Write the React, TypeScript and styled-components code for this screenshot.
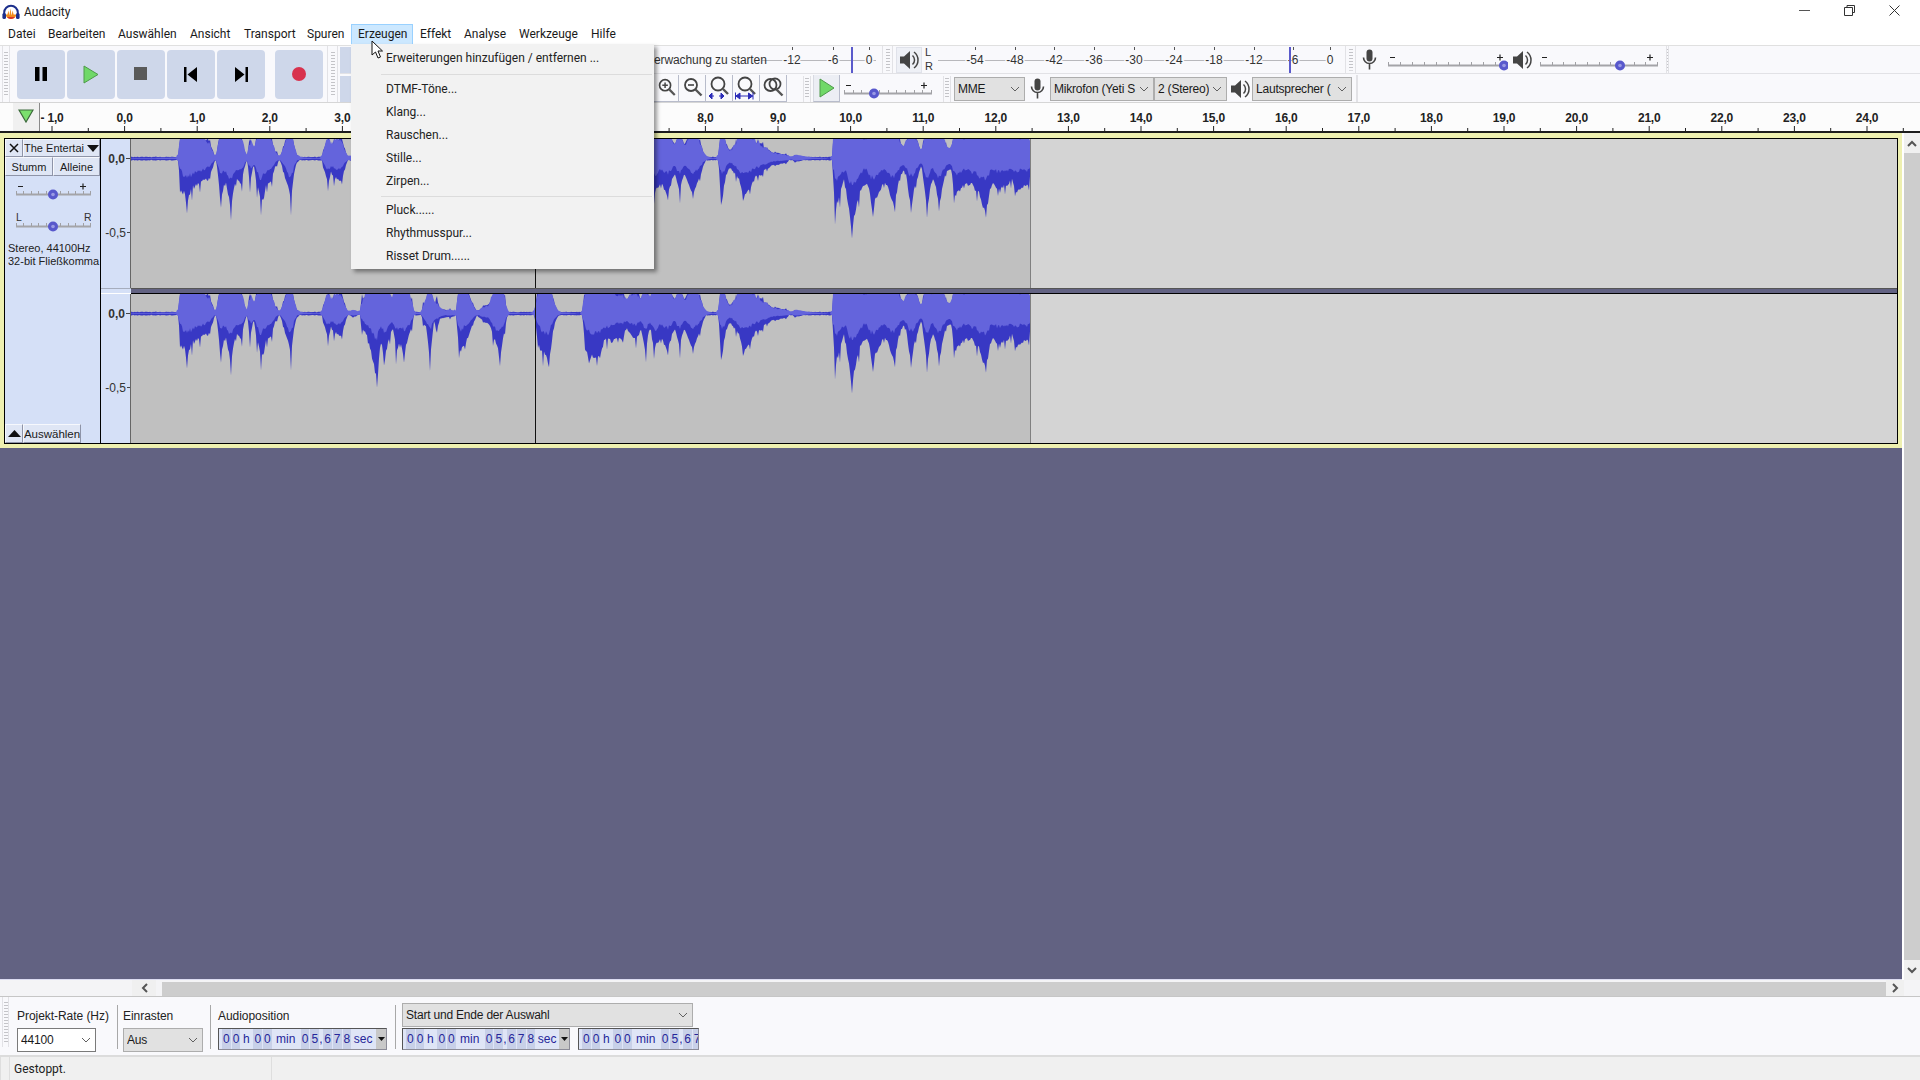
import React from "react";
import styled, { createGlobalStyle } from "styled-components";

const GlobalStyle = createGlobalStyle`
  html, body { margin: 0; padding: 0; background: #fff; }
  * { box-sizing: border-box; }
`;

const UI_FONT = `Roboto, "Noto Sans", sans-serif`;
const ARIAL = `"Liberation Sans", Arial, sans-serif`;
const PANEL = "#d5e0f7";
const BAR = "#f9f9fc";
const BLUE = "#626282";

// outline of the loudest sound, read off the picture in two stretches
const stretchA = [
  [0, 88], [145, 90], [150, 190], [170, 255], [185, 215], [210, 190], [240, 150], [250, 110], [258, 88], [262, 120], [272, 240],
  [285, 170], [302, 280], [318, 170], [335, 195], [345, 110], [352, 90], [360, 190], [372, 110], [380, 200], [392, 262], [410, 190],
  [425, 180], [432, 125], [442, 110], [448, 90], [460, 130], [483, 258], [495, 120], [505, 95], [520, 90], [575, 88], [580, 120],
  [595, 190], [605, 130], [612, 170], [635, 170], [645, 120], [655, 92], [668, 100], [690, 92], [695, 150], [715, 180], [742, 315],
  [752, 170], [763, 250], [780, 180], [792, 150], [798, 240], [810, 190], [822, 235], [845, 150], [852, 90], [875, 90], [880, 135],
  [890, 135], [900, 260], [912, 110], [920, 150], [928, 110], [945, 100], [960, 105], [978, 95], [988, 235], [1005, 195], [1030, 120],
  [1040, 95], [1060, 115], [1078, 120], [1090, 190], [1110, 245], [1125, 150], [1132, 90], [1200, 88],
].map(([x, y]) => [130 + x / 3, (y - 87) / 3]);

const stretchB = [
  [97, 560], [105, 650], [120, 710], [137, 715], [150, 600], [165, 556], [230, 552], [238, 660], [250, 705], [272, 710], [300, 660],
  [330, 640], [345, 640], [352, 600], [380, 660], [395, 600], [408, 705], [420, 600], [432, 695], [450, 640], [470, 680], [490, 600],
  [503, 695], [515, 600], [540, 675], [560, 620], [575, 560], [600, 552], [612, 560], [620, 715], [635, 600], [645, 580], [660, 620],
  [680, 680], [700, 660], [722, 620], [735, 610], [748, 590], [770, 575], [800, 570], [815, 555], [825, 565], [870, 556], [930, 552],
  [938, 750], [952, 700], [965, 630], [985, 795], [1005, 700], [1020, 630], [1045, 730], [1075, 640], [1105, 720], [1120, 620],
  [1135, 600], [1150, 720], [1165, 640], [1180, 570], [1195, 735], [1210, 620], [1230, 715], [1250, 600], [1265, 590], [1272, 700],
  [1300, 640], [1335, 680], [1360, 735], [1375, 640], [1395, 665], [1415, 660], [1430, 640], [1442, 665], [1465, 640], [1480, 660], [1486, 600],
].map(([x, y]) => [500 + x / 2.8, (y - 552) / 3]);

const outline = [...stretchA, ...stretchB];
const keyColumns = new Set(outline.map(([x]) => Math.round(x)));
const rnd = (i: number) => {
  const v = Math.sin(i * 12.9898) * 43758.5453;
  return v - Math.floor(v);
};
const depthAt = (x: number) => {
  for (let i = 1; i < outline.length; i++) {
    if (x <= outline[i][0]) {
      const [x0, y0] = outline[i - 1];
      const [x1, y1] = outline[i];
      return y0 + ((y1 - y0) * (x - x0)) / Math.max(x1 - x0, 0.01);
    }
  }
  return outline[outline.length - 1][1];
};
// quick wobble that splits the outline into separate spikes
const comb = (x: number) => {
  const cell = Math.floor(x / 4);
  const f = x / 4 - cell;
  return rnd(cell) * (1 - f) + rnd(cell + 1) * f;
};

const CENTER = 19.5;
const buildPaths = () => {
  const peakTop: string[] = [];
  const peakBottom: string[] = [];
  const rmsTop: string[] = [];
  const rmsBottom: string[] = [];
  for (let x = 131; x <= 1030; x++) {
    const d = depthAt(x);
    const px = x - 131;
    let peak = d < 3 ? 1.3 + rnd(x) * 0.8 : d * (0.6 + 0.28 * comb(x) + 0.12 * rnd(x));
    if (keyColumns.has(x) && d >= 3) peak = d;
    let sum = 0;
    for (let k = -2; k <= 2; k++) sum += depthAt(x + k);
    const avg = sum / 5;
    const rms = avg < 4 ? avg * 0.5 : Math.min(avg * 0.42 * (0.72 + 0.28 * rnd(x + 3)), peak);
    peakTop.push(`${px} ${(CENTER - Math.min(CENTER, peak * 0.9)).toFixed(1)}`);
    peakBottom.unshift(`${px} ${(CENTER + peak).toFixed(1)}`);
    rmsTop.push(`${px} ${(CENTER - Math.min(CENTER, rms * 1.9)).toFixed(1)}`);
    rmsBottom.unshift(`${px} ${(CENTER + rms).toFixed(1)}`);
  }
  return {
    peak: `M${peakTop.join("L")}L${peakBottom.join("L")}Z`,
    rms: `M${rmsTop.join("L")}L${rmsBottom.join("L")}Z`,
  };
};
const wavePaths = buildPaths();

const Page = styled.div`
  width: 1920px;
  height: 1080px;
  display: flex;
  flex-direction: column;
  overflow: hidden;
  position: relative;
  background: #fff;
  font-family: ${UI_FONT};
  color: #1a1a1a;
`;

const TitleBar = styled.div`
  height: 24px;
  display: flex;
  align-items: center;
  padding-left: 2px;
  background: #fff;
`;

const AppName = styled.span`
  margin-left: 4px;
  font-size: 12px;
  color: #222;
`;

const WindowButtons = styled.div`
  margin-left: auto;
  display: flex;
  align-items: center;
  padding: 0 20px 4px 0;
  gap: 34px;
`;

const MenuBar = styled.div`
  height: 21px;
  display: flex;
  padding-left: 1px;
  background: #fff;
`;

const MenuItem = styled.div<{ $w: number; $open?: boolean }>`
  width: ${(p) => p.$w}px;
  padding-left: 6px;
  font-size: 12px;
  line-height: 19px;
  white-space: nowrap;
  border: 1px solid ${(p) => (p.$open ? "#99d1ff" : "transparent")};
  background: ${(p) => (p.$open ? "#cce8ff" : "transparent")};
`;

const Toolbars = styled.div`
  height: 58px;
  display: flex;
  background: ${BAR};
  border-top: 1px solid #e0e0e0;
  border-bottom: 1px solid #d6d6d6;
`;

const TransportBar = styled.div`
  width: 340px;
  display: flex;
  align-items: center;
  padding-left: 2px;
`;

const Grip = styled.div<{ $w?: number; $h?: number }>`
  width: ${(p) => p.$w ?? 8}px;
  height: ${(p) => (p.$h ? `${p.$h}px` : "100%")};
  flex: none;
  border-left: 1px solid #e2e2e6;
  border-right: 1px solid #e2e2e6;
  background: repeating-linear-gradient(to bottom, #c4c4c8 0 1px, transparent 1px 3px) center / 4px 80% no-repeat;
`;

const TransportButtons = styled.div`
  display: flex;
  gap: 2px;
  margin-left: 7px;
`;

const TransportButton = styled.div<{ $gap?: number }>`
  width: 48px;
  height: 49px;
  margin-left: ${(p) => p.$gap ?? 0}px;
  display: flex;
  align-items: center;
  justify-content: center;
  background: #ced7ea;
  border-radius: 4px;
`;

const ToolRows = styled.div`
  flex: 1;
  display: flex;
  flex-direction: column;
`;

const ToolRow = styled.div<{ $top?: number }>`
  flex: 1;
  display: flex;
  align-items: center;
  padding-top: ${(p) => p.$top ?? 0}px;
  border-bottom: 1px solid #e2e2e6;

  &:last-child {
    border-bottom: 0;
  }
`;

const HiddenTools = styled.div`
  width: 314px;
  height: 100%;
  flex: none;
  display: flex;
  align-items: center;
`;

const ToolStub = styled.div`
  width: 11px;
  height: 26px;
  background: #ced7ea;
`;

const IconBox = styled.div<{ $w: number; $ml?: number }>`
  width: ${(p) => p.$w}px;
  margin-left: ${(p) => p.$ml ?? 0}px;
  height: 100%;
  flex: none;
  display: flex;
  align-items: center;
  justify-content: center;
`;

const SpeakerButton = styled(IconBox)`
  height: 26px;
  background: #eef0f6;
  border: 1px solid #e0e2ea;
`;

const ZoomButton = styled.div<{ $w?: number }>`
  width: ${(p) => p.$w ?? 27}px;
  height: 27px;
  flex: none;
  display: flex;
  align-items: center;
  justify-content: center;
  border-right: 1px solid #b8bccb;
  border-bottom: 1px solid #b8bccb;
`;

const PlayButton = styled(ZoomButton)`
  margin-left: 2px;
  background: #eceef4;
  border-left: 1px solid #d8dae2;
`;

const Select = styled.div<{ $w: number; $h?: number; $ml?: number; $white?: boolean }>`
  width: ${(p) => p.$w}px;
  height: ${(p) => p.$h ?? 24}px;
  margin-left: ${(p) => p.$ml ?? 0}px;
  flex: none;
  display: flex;
  align-items: center;
  gap: 3px;
  padding: 0 4px 0 3px;
  font-size: 12px;
  white-space: nowrap;
  overflow: hidden;
  background: ${(p) => (p.$white ? "#fff" : "#e1e1e1")};
  border: 1px solid ${(p) => (p.$white ? "#7a7a7a" : "#adadad")};
`;

const SelectText = styled.span`
  flex: 1;
  min-width: 0;
  overflow: hidden;
  font-family: ${ARIAL};
  letter-spacing: -0.2px;
`;

const Ruler = styled.div`
  height: 30px;
  position: relative;
  background: #fcfcfc;
  border-bottom: 2px solid #1c1c1c;
`;

const PlayHead = styled.div`
  position: absolute;
  left: 13px;
  top: 0;
  width: 27px;
  height: 28px;
  display: flex;
  justify-content: center;
  padding-top: 6px;
  background: #f0f0f0;
  border-right: 1px solid #8a8a8a;
`;

const Main = styled.div`
  flex: 1;
  min-height: 0;
  display: flex;
`;

const WorkArea = styled.div`
  width: 1902px;
  display: flex;
  flex-direction: column;
  background: ${BLUE};
  border-bottom: 1px solid #dcdcf2;
`;

const TrackFrame = styled.div`
  height: 315px;
  flex: none;
  padding: 5px 4px 4px 4px;
  background: #eef0b0;
`;

const Track = styled.div`
  height: 100%;
  display: flex;
  border: 1px solid #000;
`;

const ControlPanel = styled.div`
  width: 96px;
  flex: none;
  display: flex;
  flex-direction: column;
  background: ${PANEL};
  border-right: 1px solid #000;
  font-family: ${ARIAL};
`;

const PanelRow = styled.div<{ $h?: number }>`
  height: ${(p) => p.$h ?? 19}px;
  flex: none;
  display: flex;
`;

const PanelButton = styled.div<{ $w?: number; $grow?: boolean; $fs?: number }>`
  width: ${(p) => (p.$w ? `${p.$w}px` : "auto")};
  flex: ${(p) => (p.$grow ? 1 : "none")};
  min-width: 0;
  display: flex;
  align-items: center;
  justify-content: center;
  font-size: ${(p) => p.$fs ?? 11}px;
  white-space: nowrap;
  overflow: hidden;
  background: #dfe6f5;
  border: 1px solid #f6f8fd;
  border-right-color: #8e94a8;
  border-bottom-color: #8e94a8;
`;

const SliderSlot = styled.div<{ $mt: number }>`
  margin: ${(p) => p.$mt}px 0 0 11px;
  height: 22px;
`;

const TrackInfo = styled.div`
  margin: 9px 0 0 3px;
  font-size: 11px;
  line-height: 12.5px;
  white-space: nowrap;
  color: #222;
`;

const PanelFooter = styled.div`
  margin-top: auto;
  height: 19px;
  display: flex;
`;

const Channels = styled.div`
  flex: 1;
  display: flex;
  flex-direction: column;
`;

const Channel = styled.div`
  height: 149px;
  flex: none;
  display: flex;
  background: #d4d4d4;
`;

const ChannelGap = styled.div`
  height: 6px;
  flex: none;
  display: flex;
  background: ${BLUE};
  border-top: 1px solid #555;
  border-bottom: 1px solid #000;
`;

const GapPanel = styled.div`
  width: 30px;
  margin: -1px 0;
  background: ${PANEL};
  border-top: 1px solid #a6adbd;
  border-bottom: 1px solid #fff;
`;

const Scale = styled.div`
  width: 30px;
  flex: none;
  background: ${PANEL};
  border-right: 1px solid #666;
`;

const VScroll = styled.div`
  width: 16px;
  margin-left: 2px;
  display: flex;
  flex-direction: column;
  justify-content: space-between;
  background: #cdcdcd;
`;

const ScrollButton = styled.div<{ $w?: number; $h?: number }>`
  width: ${(p) => (p.$w ? `${p.$w}px` : "100%")};
  height: ${(p) => (p.$h ? `${p.$h}px` : "100%")};
  flex: none;
  display: flex;
  align-items: center;
  justify-content: center;
  background: #f0f0f0;
`;

const HScroll = styled.div`
  height: 17px;
  flex: none;
  display: flex;
  background: #f4f4f6;
  border-bottom: 1px solid #c6c6c6;
`;

const HScrollBlank = styled.div<{ $w: number }>`
  width: ${(p) => p.$w}px;
  flex: none;
`;

const HThumb = styled.div`
  flex: 1;
  margin-top: 2px;
  background: #cdcdcd;
`;

const BottomBar = styled.div`
  height: 58px;
  flex: none;
  display: flex;
  padding-left: 2px;
  background: ${BAR};
  font-family: ${ARIAL};
`;

const BottomGroup = styled.div<{ $w: number; $ml: number }>`
  width: ${(p) => p.$w}px;
  margin-left: ${(p) => p.$ml}px;
  flex: none;
  display: flex;
  flex-direction: column;
`;

const GroupTop = styled.div<{ $flush?: boolean }>`
  height: 31px;
  display: flex;
  align-items: flex-end;
  padding-bottom: ${(p) => (p.$flush ? 1 : 5)}px;
`;

const Label = styled.div`
  font-size: 12px;
  letter-spacing: -0.05px;
  white-space: nowrap;
  color: #222;
`;

const Controls = styled.div`
  display: flex;
  gap: 8px;
`;

const Separator = styled.div`
  width: 1px;
  height: 44px;
  margin: 8px 0 0 0;
  flex: none;
  background: #a8a8a8;
`;

const TimeField = styled.div<{ $w: number }>`
  width: ${(p) => p.$w}px;
  height: 22px;
  flex: none;
  display: flex;
  align-items: stretch;
  overflow: hidden;
  padding-left: 2px;
  font-size: 12px;
  color: #26269a;
  background: #dfe5f6;
  border: 1px solid #8c8c98;
  border-top-color: #555;
  border-left-color: #555;
`;

const Digit = styled.span`
  width: 9.7px;
  flex: none;
  text-align: center;
  line-height: 20px;
  background: #c8d0e8;
  border-left: 1px solid #dfe5f6;
`;

const Unit = styled.span<{ $w: number }>`
  width: ${(p) => p.$w}px;
  flex: none;
  text-align: center;
  line-height: 20px;
`;

const FieldArrow = styled.div`
  margin-left: auto;
  width: 10px;
  flex: none;
  display: flex;
  align-items: center;
  justify-content: center;
  background: #c8c8c8;
`;

const StatusBar = styled.div`
  height: 25px;
  flex: none;
  display: flex;
  background: #f0f0f0;
  border-top: 2px solid #dcdcdc;
  font-size: 12px;
  line-height: 24px;
  color: #222;
`;

const StatusCell = styled.div<{ $w: number }>`
  width: ${(p) => p.$w}px;
  padding-left: 4px;
  border-left: 1px solid #dedede;
`;

const Dropdown = styled.div`
  position: absolute;
  left: 351px;
  top: 44px;
  width: 303px;
  height: 225px;
  padding-top: 3px;
  background: #f2f2f2;
  box-shadow: 3px 3px 4px rgba(0, 0, 0, 0.4);
  font-size: 12px;
  color: #222;
`;

const DropdownItem = styled.div`
  height: 23px;
  line-height: 23px;
  padding-left: 35px;
  white-space: nowrap;
`;

const DropdownRule = styled.div<{ $tight?: boolean }>`
  height: 1px;
  margin: ${(p) => (p.$tight ? "3px 2px 2px 30px" : "4px 2px 3px 30px")};
  background: #dcdcdc;
`;

const Pointer = styled.svg`
  position: absolute;
  left: 371px;
  top: 40px;
`;

const SliderSvg = styled.svg<{ $drop?: number }>`
  flex: none;
  margin-top: ${(p) => p.$drop ?? 0}px;
`;

const Chevron = () => (
  <svg width="10" height="6" viewBox="0 0 10 6" style={{ flex: "none" }}>
    <path d="M1 1l4 4 4-4" fill="none" stroke="#606060" strokeWidth="1" />
  </svg>
);

const Logo = () => (
  <svg width="18" height="16" viewBox="0 0 18 16">
    <path d="M2.2 11V8.5a6.8 6.8 0 0 1 13.6 0V11" fill="none" stroke="#1c2f8c" strokeWidth="2" />
    <path d="M4 10.5h1.4l1-4 1 5 1-7 1.2 7 1-5 1 4H14v1.5c-1 2-3 3-5 3s-4-1-5-3z" fill="#f08a1c" />
    <path d="M5 13h8c-.9 1.3-2.500 2-4 2s-3.100-.7-4-2z" fill="#d8342a" />
    <rect x="0.400" y="9" width="3.600" height="6" rx="1.600" fill="#1c2f8c" />
    <rect x="14" y="9" width="3.600" height="6" rx="1.600" fill="#1c2f8c" />
  </svg>
);

const Magnifier = ({ mark, under }: { mark?: "plus" | "minus" | "double"; under?: "both" | "bars" }) => (
  <svg width="26" height="24" viewBox="0 0 26 24">
    {mark === "double" && <circle cx="15" cy="8" r="5.500" fill="none" stroke="#444" strokeWidth="1.800" />}
    <circle cx={mark === "double" ? 10.500 : 12} cy={under ? 8 : 9} r={under ? 6.500 : 6} fill="none" stroke="#444" strokeWidth="1.800" />
    <path d={under ? "M17 13l5 5" : "M16.500 13.500l6 6"} stroke="#555" strokeWidth="2.400" />
    {(mark === "plus" || mark === "minus") && <path d="M9 9h6" stroke="#444" strokeWidth="1.600" />}
    {mark === "plus" && <path d="M12 6v6" stroke="#444" strokeWidth="1.600" />}
    {under === "both" && <path d="M3 20h5M3 20l3-3v6zM18 20h-5M18 20l-3-3v6z" fill="#2c2cb8" stroke="#2c2cb8" strokeWidth="1" />}
    {under === "bars" && <path d="M2.500 16.500v7M20 16.500v7M2.500 20h17.500M3 20l4-3v6zM19.500 20l-4-3v6z" fill="#2c2cb8" stroke="#2c2cb8" strokeWidth="1" />}
  </svg>
);

const Mic = () => (
  <svg width="15" height="22" viewBox="0 0 15 22">
    <rect x="4.500" y="0.500" width="6" height="12" rx="3" fill="#444" />
    <path d="M1.500 8.500a6 6 0 0 0 12 0M7.500 14.500v6" fill="none" stroke="#444" strokeWidth="1.600" />
  </svg>
);

const Speaker = () => (
  <svg width="20" height="22" viewBox="0 0 20 22">
    <path d="M1 7.500h4l6-5.500v18l-6-5.500H1z" fill="#444" />
    <path d="M13.500 6.500a6 6 0 0 1 0 9M15 3a10 10 0 0 1 0 16" fill="none" stroke="#444" strokeWidth="1.500" />
  </svg>
);

type SliderProps = { width: number; thumb: number; ticks?: number; signs?: boolean; letters?: boolean; drop?: number };

const Slider = ({ width, thumb, ticks = 10, signs, letters, drop }: SliderProps) => (
  <SliderSvg $drop={drop} width={width} height="22" viewBox={`0 0 ${width} 22`}>
    {signs && <path d={`M2 7.500h5M${width - 11} 7.500h6M${width - 8} 4.500v6`} stroke="#222" strokeWidth="1.200" />}
    {letters && (
      <g fontFamily={ARIAL} fontSize="10.500" fill="#333">
        <text x="0" y="10">L</text>
        <text x={width - 7} y="10">R</text>
      </g>
    )}
    <path d={`M0 15.500H${width}`} stroke="#a4a4a8" strokeWidth="2" />
    {Array.from({ length: ticks + 1 }, (_, i) => {
      const x = Math.round((i * (width - 1)) / ticks) + 0.5;
      return <path key={i} d={`M${x} 12v3`} stroke="#a0a0a4" strokeWidth="1" />;
    })}
    <circle cx={thumb} cy="15.500" r="5" fill="#5858cc" />
    <circle cx={thumb} cy="15.500" r="1.800" fill="#9a9ae4" />
  </SliderSvg>
);

type MeterProps = { width: number; from: number; labels: [string, number][]; mark: number; lineStart: number; children?: React.ReactNode };

const Meter = ({ width, from, labels, mark, lineStart, children }: MeterProps) => (
  <svg width={width} height="27" viewBox={`0 0 ${width} 27`} style={{ flex: "none" }}>
    <path d={`M${lineStart} 14.500H${width - 3}`} stroke="#b8b8bc" strokeWidth="1" />
    {labels.map(([text, x]) => (
      <g key={text}>
        <path d={`M${x - from + 0.5} 1v3`} stroke="#555" strokeWidth="1" />
        <text
          x={x - from}
          y="18"
          textAnchor="middle"
          fontFamily={ARIAL}
          fontSize="12"
          fill="#333"
          stroke={BAR}
          strokeWidth="3"
          style={{ paintOrder: "stroke" }}
        >
          {text}
        </text>
      </g>
    ))}
    <rect x={mark - from} y="1" width="2" height="26" fill="#5a5acb" />
    {children}
  </svg>
);

const Wave = () => (
  <svg width="900" height="149" viewBox="0 0 900 149" style={{ flex: "none" }}>
    <rect width="900" height="149" fill="#c0c0c0" />
    <path d={wavePaths.peak} fill="#3838c4" />
    <path d={wavePaths.rms} fill="#6464dc" />
    <path d="M404.500 0v149" stroke="#111" strokeWidth="1" />
    <path d="M899.500 0v149" stroke="#808080" strokeWidth="1" />
  </svg>
);

const ScaleMarks = () => (
  <Scale>
    <svg width="29" height="149" viewBox="0 0 29 149">
      <text x="24" y="24" textAnchor="end" fontFamily={ARIAL} fontSize="12" fontWeight="700" fill="#333">0,0</text>
      <text x="25" y="98" textAnchor="end" fontFamily={ARIAL} fontSize="12" fill="#333">-0,5</text>
      <path d="M25 19.500h4M26 93.500h3" stroke="#444" strokeWidth="1" />
    </svg>
  </Scale>
);

const secondX = (t: number) => 124.6 + 72.6 * t;

// the labels for 4 to 7 seconds lie behind the open menu
const TimelineMarks = () => {
  const seconds = Array.from({ length: 26 }, (_, i) => i - 1);
  return (
    <svg width="1920" height="28" viewBox="0 0 1920 28">
      {seconds.map((t) => (
        <g key={t}>
          <path d={`M${secondX(t).toFixed(1)} 23v5`} stroke="#222" strokeWidth="1" />
          <path d={`M${secondX(t + 0.5).toFixed(1)} 25v3`} stroke="#222" strokeWidth="1" />
          {(t < 4 || t > 7) && (
            <text
              x={t < 0 ? 52 : secondX(t)}
              y="19"
              textAnchor="middle"
              fontFamily={ARIAL}
              fontSize="12"
              fontWeight="700"
              letterSpacing="-0.2"
              fill="#222"
            >
              {t < 0 ? "- 1,0" : `${t},0`}
            </text>
          )}
        </g>
      ))}
    </svg>
  );
};

const TimeDigits = ({ value }: { value: string }) => (
  <>
    {value.split("").map((c, i) => (
      <Digit key={i}>{c}</Digit>
    ))}
  </>
);

const Time = ({ w, full }: { w: number; full?: boolean }) => (
  <TimeField $w={w}>
    <TimeDigits value="00" />
    <Unit $w={12}>h</Unit>
    <TimeDigits value="00" />
    <Unit $w={28}>min</Unit>
    <TimeDigits value="05" />
    <Unit $w={3}>,</Unit>
    <TimeDigits value={full ? "678" : "67"} />
    {full && <Unit $w={24}>sec</Unit>}
    {full && (
      <FieldArrow>
        <svg width="7" height="4" viewBox="0 0 7 4">
          <path d="M0 0h7L3.500 4z" fill="#111" />
        </svg>
      </FieldArrow>
    )}
  </TimeField>
);

const menus: [string, number][] = [
  ["Datei", 40],
  ["Bearbeiten", 70],
  ["Auswählen", 72],
  ["Ansicht", 54],
  ["Transport", 63],
  ["Spuren", 51],
  ["Erzeugen", 62],
  ["Effekt", 44],
  ["Analyse", 55],
  ["Werkzeuge", 72],
  ["Hilfe", 50],
];

const recordLabels: [string, number][] = [
  ["-12", 792],
  ["-6", 833],
  ["0", 869],
];
const playLabels: [string, number][] = [
  ["-54", 975],
  ["-48", 1015],
  ["-42", 1054],
  ["-36", 1094],
  ["-30", 1134],
  ["-24", 1174],
  ["-18", 1214],
  ["-12", 1254],
  ["-6", 1293],
  ["0", 1330],
];

export default function App() {
  return (
    <>
      <GlobalStyle />
      <Page>
        <TitleBar>
          <Logo />
          <AppName>Audacity</AppName>
          <WindowButtons>
            <svg width="11" height="11" viewBox="0 0 11 11">
              <path d="M0 5.500h11" stroke="#555" strokeWidth="1" />
            </svg>
            <svg width="11" height="11" viewBox="0 0 11 11">
              <path d="M3 2.500V.5h7.500v7H8.500M.5 2.500h8v8h-8z" fill="none" stroke="#333" strokeWidth="1" />
            </svg>
            <svg width="11" height="11" viewBox="0 0 11 11">
              <path d="M.5.5l10 10M10.500.5l-10 10" stroke="#333" strokeWidth="1" />
            </svg>
          </WindowButtons>
        </TitleBar>

        <MenuBar>
          {menus.map(([name, w]) => (
            <MenuItem key={name} $w={w} $open={name === "Erzeugen"}>
              {name}
            </MenuItem>
          ))}
        </MenuBar>

        <Toolbars>
          <TransportBar>
            <Grip />
            <TransportButtons>
              <TransportButton>
                <svg width="14" height="16" viewBox="0 0 14 16">
                  <path d="M1 1h4.500v14H1zM8.500 1H13v14H8.500z" fill="#000" />
                </svg>
              </TransportButton>
              <TransportButton>
                <svg width="16" height="19" viewBox="0 0 16 19">
                  <path d="M1 1l14 8.500L1 18z" fill="#70d868" stroke="#4e9a4a" strokeWidth="1" />
                </svg>
              </TransportButton>
              <TransportButton>
                <svg width="14" height="14" viewBox="0 0 14 14">
                  <rect width="13" height="13" fill="#5a5a5a" />
                </svg>
              </TransportButton>
              <TransportButton>
                <svg width="14" height="15" viewBox="0 0 14 15">
                  <path d="M0 0h2.500v15H0zM13 0v15L3.500 7.500z" fill="#000" />
                </svg>
              </TransportButton>
              <TransportButton>
                <svg width="14" height="15" viewBox="0 0 14 15">
                  <path d="M11.500 0H14v15h-2.500zM1 0v15l9.500-7.500z" fill="#000" />
                </svg>
              </TransportButton>
              <TransportButton $gap={8}>
                <svg width="16" height="16" viewBox="0 0 16 16">
                  <circle cx="8" cy="8" r="7" fill="#d8324e" />
                </svg>
              </TransportButton>
            </TransportButtons>
            <IconBox $w={4} />
            <Grip $w={11} />
          </TransportBar>

          <ToolRows>
            <ToolRow>
              <HiddenTools>
                <ToolStub />
              </HiddenTools>
              <Meter width={225} from={654} labels={recordLabels} mark={851} lineStart={108}>
                <text x="0" y="18" fontFamily={ARIAL} fontSize="12" letterSpacing="-0.1" fill="#333">
                  erwachung zu starten
                </text>
              </Meter>
              <IconBox $w={3} />
              <Grip $w={11} />
              <IconBox $w={3} />
              <SpeakerButton $w={26}>
                <Speaker />
              </SpeakerButton>
              <Meter width={415} from={922} labels={playLabels} mark={1289} lineStart={16}>
                <text x="3" y="10" fontFamily={ARIAL} fontSize="11" fill="#333">L</text>
                <text x="3" y="24" fontFamily={ARIAL} fontSize="11" fill="#333">R</text>
              </Meter>
              <IconBox $w={8} />
              <Grip $w={11} />
              <IconBox $w={15} $ml={6}>
                <Mic />
              </IconBox>
              <IconBox $w={11} />
              <Slider width={120} thumb={116} signs drop={2} />
              <IconBox $w={28}>
                <Speaker />
              </IconBox>
              <IconBox $w={0} $ml={4} />
              <Slider width={118} thumb={80} signs drop={2} />
              <IconBox $w={8} />
              <Grip $w={3} />
            </ToolRow>

            <ToolRow $top={1}>
              <HiddenTools>
                <ToolStub />
              </HiddenTools>
              <ZoomButton $w={25}>
                <Magnifier mark="plus" />
              </ZoomButton>
              <ZoomButton>
                <Magnifier mark="minus" />
              </ZoomButton>
              <ZoomButton>
                <Magnifier under="both" />
              </ZoomButton>
              <ZoomButton>
                <Magnifier under="bars" />
              </ZoomButton>
              <ZoomButton>
                <Magnifier mark="double" />
              </ZoomButton>
              <IconBox $w={16} />
              <Grip $h={26} />
              <PlayButton>
                <svg width="16" height="20" viewBox="0 0 16 20">
                  <path d="M1 1l14 9-14 9z" fill="#70d868" stroke="#4e9a4a" strokeWidth="1" />
                </svg>
              </PlayButton>
              <IconBox $w={4} />
              <Slider width={88} thumb={30} signs />
              <IconBox $w={11} />
              <Grip $h={26} />
              <IconBox $w={3} />
              <Select $w={71}>
                <SelectText>MME</SelectText>
                <Chevron />
              </Select>
              <IconBox $w={25}>
                <Mic />
              </IconBox>
              <Select $w={104}>
                <SelectText>Mikrofon (Yeti S</SelectText>
                <Chevron />
              </Select>
              <Select $w={73}>
                <SelectText>2 (Stereo)</SelectText>
                <Chevron />
              </Select>
              <IconBox $w={25}>
                <Speaker />
              </IconBox>
              <Select $w={100}>
                <SelectText>Lautsprecher (</SelectText>
                <Chevron />
              </Select>
              <IconBox $w={4} />
              <Grip $w={2} />
            </ToolRow>
          </ToolRows>
        </Toolbars>

        <Ruler>
          <TimelineMarks />
          <PlayHead>
            <svg width="16" height="14" viewBox="0 0 16 14">
              <path d="M1 1h14L8 13z" fill="#7be06e" stroke="#3c6a3c" strokeWidth="1.200" />
            </svg>
          </PlayHead>
        </Ruler>

        <Main>
          <WorkArea>
            <TrackFrame>
              <Track>
                <ControlPanel>
                  <PanelRow $h={18}>
                    <PanelButton $w={18}>
                      <svg width="10" height="10" viewBox="0 0 10 10">
                        <path d="M1 1l8 8M9 1l-8 8" stroke="#111" strokeWidth="1.500" />
                      </svg>
                    </PanelButton>
                    <PanelButton $grow>
                      The Entertai
                      <svg width="12" height="7" viewBox="0 0 12 7" style={{ marginLeft: 3, flex: "none" }}>
                        <path d="M0 0h12L6 7z" fill="#111" />
                      </svg>
                    </PanelButton>
                  </PanelRow>
                  <PanelRow>
                    <PanelButton $w={48}>Stumm</PanelButton>
                    <PanelButton $grow>Alleine</PanelButton>
                  </PanelRow>
                  <SliderSlot $mt={3}>
                    <Slider width={75} thumb={37} signs />
                  </SliderSlot>
                  <SliderSlot $mt={10}>
                    <Slider width={75} thumb={37} letters />
                  </SliderSlot>
                  <TrackInfo>
                    Stereo, 44100Hz
                    <br />
                    32-bit Fließkomma
                  </TrackInfo>
                  <PanelFooter>
                    <PanelButton $w={18}>
                      <svg width="13" height="7" viewBox="0 0 13 7">
                        <path d="M0 7h13L6.500 0z" fill="#111" />
                      </svg>
                    </PanelButton>
                    <PanelButton $w={58} $fs={11.5}>Auswählen</PanelButton>
                  </PanelFooter>
                </ControlPanel>

                <Channels>
                  <Channel>
                    <ScaleMarks />
                    <Wave />
                  </Channel>
                  <ChannelGap>
                    <GapPanel />
                  </ChannelGap>
                  <Channel>
                    <ScaleMarks />
                    <Wave />
                  </Channel>
                </Channels>
              </Track>
            </TrackFrame>
          </WorkArea>
          <VScroll>
            <ScrollButton $h={20}>
              <svg width="10" height="7" viewBox="0 0 10 7">
                <path d="M1 6l4-4 4 4" fill="none" stroke="#555" strokeWidth="2" />
              </svg>
            </ScrollButton>
            <ScrollButton $h={20}>
              <svg width="10" height="7" viewBox="0 0 10 7">
                <path d="M1 1l4 4 4-4" fill="none" stroke="#555" strokeWidth="2" />
              </svg>
            </ScrollButton>
          </VScroll>
        </Main>

        <HScroll>
          <HScrollBlank $w={132} />
          <ScrollButton $w={24}>
            <svg width="7" height="10" viewBox="0 0 7 10">
              <path d="M6 1L2 5l4 4" fill="none" stroke="#555" strokeWidth="2" />
            </svg>
          </ScrollButton>
          <HScrollBlank $w={6} />
          <HThumb />
          <ScrollButton $w={18}>
            <svg width="7" height="10" viewBox="0 0 7 10">
              <path d="M1 1l4 4-4 4" fill="none" stroke="#555" strokeWidth="2" />
            </svg>
          </ScrollButton>
          <HScrollBlank $w={16} />
        </HScroll>

        <BottomBar>
          <Grip $w={7} $h={50} />
          <BottomGroup $w={100} $ml={8}>
            <GroupTop>
              <Label>Projekt-Rate (Hz)</Label>
            </GroupTop>
            <Select $w={79} $white>
              <SelectText>44100</SelectText>
              <Chevron />
            </Select>
          </BottomGroup>
          <Separator />
          <BottomGroup $w={87} $ml={5}>
            <GroupTop>
              <Label>Einrasten</Label>
            </GroupTop>
            <Select $w={80}>
              <SelectText>Aus</SelectText>
              <Chevron />
            </Select>
          </BottomGroup>
          <Separator />
          <BottomGroup $w={177} $ml={7}>
            <GroupTop>
              <Label>Audioposition</Label>
            </GroupTop>
            <Time w={169} full />
          </BottomGroup>
          <Separator />
          <BottomGroup $w={299} $ml={6}>
            <GroupTop $flush>
              <Select $w={291}>
                <SelectText>Start und Ende der Auswahl</SelectText>
                <Chevron />
              </Select>
            </GroupTop>
            <Controls>
              <Time w={168} full />
              <Time w={121} />
            </Controls>
          </BottomGroup>
        </BottomBar>

        <StatusBar>
          <StatusCell $w={9} />
          <StatusCell $w={262}>Gestoppt.</StatusCell>
          <StatusCell $w={1649} />
        </StatusBar>

        <Dropdown>
          <DropdownItem>Erweiterungen hinzufügen / entfernen ...</DropdownItem>
          <DropdownRule />
          <DropdownItem>DTMF-Töne...</DropdownItem>
          <DropdownItem>Klang...</DropdownItem>
          <DropdownItem>Rauschen...</DropdownItem>
          <DropdownItem>Stille...</DropdownItem>
          <DropdownItem>Zirpen...</DropdownItem>
          <DropdownRule $tight />
          <DropdownItem>Pluck......</DropdownItem>
          <DropdownItem>Rhythmusspur...</DropdownItem>
          <DropdownItem>Risset Drum......</DropdownItem>
        </Dropdown>

        <Pointer width="13" height="19" viewBox="0 0 13 19">
          <path d="M1 1v14l3.500-3 2.500 6 2.500-1-2.500-6h4.500z" fill="#fff" stroke="#111" strokeWidth="1" />
        </Pointer>
      </Page>
    </>
  );
}
